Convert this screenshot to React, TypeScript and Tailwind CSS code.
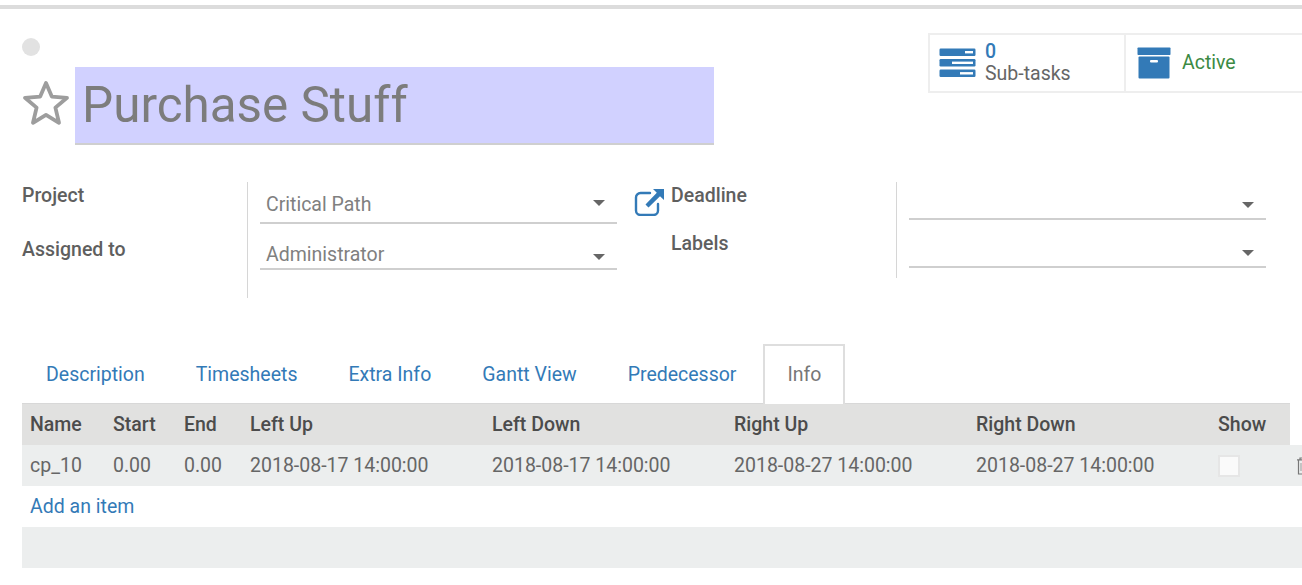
import React from 'react';

const StarIcon = () => (
  <svg width="48" height="46" viewBox="0 0 48 46" className="shrink-0 mb-[6px]">
    <path
      d="M24 3L29.8 16.6L45 17.8L33.4 27.6L37 42.8L24 34.8L11 42.8L14.6 27.6L3 17.8L18.2 16.6Z"
      fill="none"
      stroke="#9d9d9d"
      strokeWidth="3.8"
      strokeLinejoin="round"
    />
  </svg>
);

const TasksIcon = () => (
  <svg width="37" height="30" viewBox="0 0 37 30" className="shrink-0">
    <rect x="0.5" y="0.5" width="36" height="7.5" rx="1.2" fill="#337ab7" />
    <rect x="26" y="3" width="8" height="2.4" fill="#fff" />
    <rect x="0.5" y="11" width="36" height="7.5" rx="1.2" fill="#337ab7" />
    <rect x="13" y="13.6" width="21" height="2.4" fill="#fff" />
    <rect x="0.5" y="21.5" width="36" height="7.5" rx="1.2" fill="#337ab7" />
    <rect x="21" y="24.1" width="13" height="2.4" fill="#fff" />
  </svg>
);

const ArchiveIcon = () => (
  <svg width="34" height="32" viewBox="0 0 34 32" className="shrink-0">
    <rect x="0.5" y="0.5" width="33" height="7.5" rx="0.8" fill="#337ab7" />
    <rect x="1.5" y="9.5" width="31" height="22" rx="1" fill="#337ab7" />
    <rect x="13" y="13" width="8" height="2.6" rx="1" fill="#fff" />
  </svg>
);

const ExternalIcon = () => (
  <svg width="32" height="28" viewBox="0 0 32 28" className="shrink-0">
    <path
      d="M16 5H6.5A4.5 4.5 0 0 0 2 9.5V22.5A4.5 4.5 0 0 0 6.5 27H19.5A4.5 4.5 0 0 0 24 22.5V16"
      fill="none"
      stroke="#337ab7"
      strokeWidth="2.4"
      strokeLinecap="round"
    />
    <path d="M19 1H30V12L26 8.2L14.5 19.5L11.5 16.5L22.8 4.8Z" fill="#337ab7" />
  </svg>
);

const TrashIcon = () => (
  <svg width="10" height="18" viewBox="0 0 10 18" className="shrink-0">
    <path d="M0 2.8H10M3 2.8V1H7V2.8M1.5 2.8V17H10" fill="none" stroke="#777" strokeWidth="1.2" />
    <path d="M4 6V14M7 6V14" stroke="#999" strokeWidth="1" />
  </svg>
);

function SelectField({ value, className, caretClass }: { value?: string; className: string; caretClass: string }) {
  return (
    <div className={`flex items-center justify-between border-b-2 border-[#cfcfcf] pl-[6px] pr-[12px] ${className}`}>
      <span className="mt-[4px] text-[19.5px] leading-[28px] text-[#808080]">{value}</span>
      <span className={`w-0 h-0 border-x-[6px] border-x-transparent border-t-[6px] border-t-[#666] ${caretClass}`} />
    </div>
  );
}

const TABS = ['Description', 'Timesheets', 'Extra Info', 'Gantt View', 'Predecessor'];
const COLUMNS = ['Name', 'Start', 'End', 'Left Up', 'Left Down', 'Right Up', 'Right Down', 'Show'];
const ROW = ['cp_10', '0.00', '0.00', '2018-08-17 14:00:00', '2018-08-17 14:00:00', '2018-08-27 14:00:00', '2018-08-27 14:00:00'];

export default function App() {
  return (
    <div
      className="w-[1302px] h-[585px] overflow-hidden bg-white"
      style={{ fontFamily: 'Roboto, "Liberation Sans", sans-serif' }}
    >
      <div className="pt-[5px]">
        <div className="h-[4px] bg-[#dcdcdc]" />
      </div>

      {/* Header */}
      <div className="flex justify-between h-[136px] pl-[22px]">
        <div className="pt-[29px]">
          <div className="w-[18px] h-[18px] rounded-full bg-[#e2e2e2]" />
          <div className="flex items-center mt-[11px]">
            <StarIcon />
            <div className="ml-[5px] w-[639px] h-[78px] bg-[#d1d1ff] border-b-2 border-[#cfcfcf] pl-[7px] text-[49.4px] leading-[76px] text-[#7c7c7c]">
              Purchase Stuff
            </div>
          </div>
        </div>
        <div className="flex pt-[24px] w-[374px]">
          <div className="flex items-center w-[198px] h-[60px] border-2 border-[#eeeeee] pl-[9px]">
            <TasksIcon />
            <div className="ml-[9px]">
              <div className="text-[19.5px] leading-[20px] font-medium text-[#337ab7]">0</div>
              <div className="text-[19.5px] leading-[23px] text-[#666]">Sub-tasks</div>
            </div>
          </div>
          <div className="flex flex-1 items-center h-[60px] border-2 border-x-0 border-[#eeeeee] pl-[11px]">
            <ArchiveIcon />
            <span className="ml-[11px] text-[19.5px] text-[#3c8a44]">Active</span>
          </div>
        </div>
      </div>

      {/* Form */}
      <div className="flex pt-[37px] pl-[22px] h-[199px]">
        <div className="w-[225px] h-[116px] flex flex-col pt-[1px] text-[19.5px] font-medium text-[#5f5f5f]">
          <div className="h-[54px] leading-[26px]">Project</div>
          <div className="leading-[26px]">Assigned to</div>
        </div>
        <div className="w-[370px] h-[116px] border-l border-[#d6d6d6] pl-[12px] pt-[8px]">
          <SelectField value="Critical Path" className="w-[357px] h-[34px] pb-[6px]" caretClass="" />
          <SelectField value="Administrator" className="w-[357px] h-[46px] pt-[13px]" caretClass="mt-[9px]" />
        </div>
        <div className="w-[36px] pt-[6px] ml-[17px] mr-[-17px]">
          <ExternalIcon />
        </div>
        <div className="w-[225px] ml-[18px] h-[96px] pt-[1px] text-[19.5px] font-medium text-[#5f5f5f]">
          <div className="h-[48px] leading-[26px]">Deadline</div>
          <div className="leading-[26px]">Labels</div>
        </div>
        <div className="h-[96px] border-l border-[#d6d6d6] pl-[12px]">
          <SelectField className="w-[357px] h-[38px]" caretClass="mt-[10px]" />
          <SelectField className="w-[357px] h-[48px]" caretClass="mt-[20px]" />
        </div>
      </div>

      {/* Tabs */}
      <div className="flex gap-[3px] pl-[22px] h-[59px] text-[19.5px]">
        {TABS.map((tab) => (
          <div key={tab} className="px-[24px] pt-[16px] text-[#337ab7]">{tab}</div>
        ))}
        <div className="relative z-10 px-[22px] pt-[14px] border-2 border-b-0 border-[#dedede] h-[60px] bg-white text-[#777]">Info</div>
      </div>

      {/* Table */}
      <div className="pl-[22px] text-[19.5px]">
        <div className="grid grid-cols-[83px_71px_66px_242px_242px_242px_242px_80px] w-[1268px] h-[42px] items-center border-t border-[#d8d8d8] bg-[#e1e1e0] font-medium text-[#4c4c4c]">
          {COLUMNS.map((col) => (
            <div key={col} className="pl-[8px]">{col}</div>
          ))}
        </div>
        <div className="grid grid-cols-[83px_71px_66px_242px_242px_242px_242px_80px_1fr] h-[41px] items-center bg-[#eceeee] pt-[1px] text-[#666]">
          {ROW.map((cell, i) => (
            <div key={i} className="pl-[8px]">{cell}</div>
          ))}
          <div className="pl-[8px]">
            <div className="w-[22px] h-[22px] border-2 border-[#e6e6e6] bg-[#fafafa]" />
          </div>
          <div className="pl-[7px]">
            <TrashIcon />
          </div>
        </div>
        <div className="h-[41px] pl-[8px] leading-[41px] text-[#337ab7]">Add an item</div>
        <div className="h-[41px] bg-[#eceeee]" />
      </div>
    </div>
  );
}
